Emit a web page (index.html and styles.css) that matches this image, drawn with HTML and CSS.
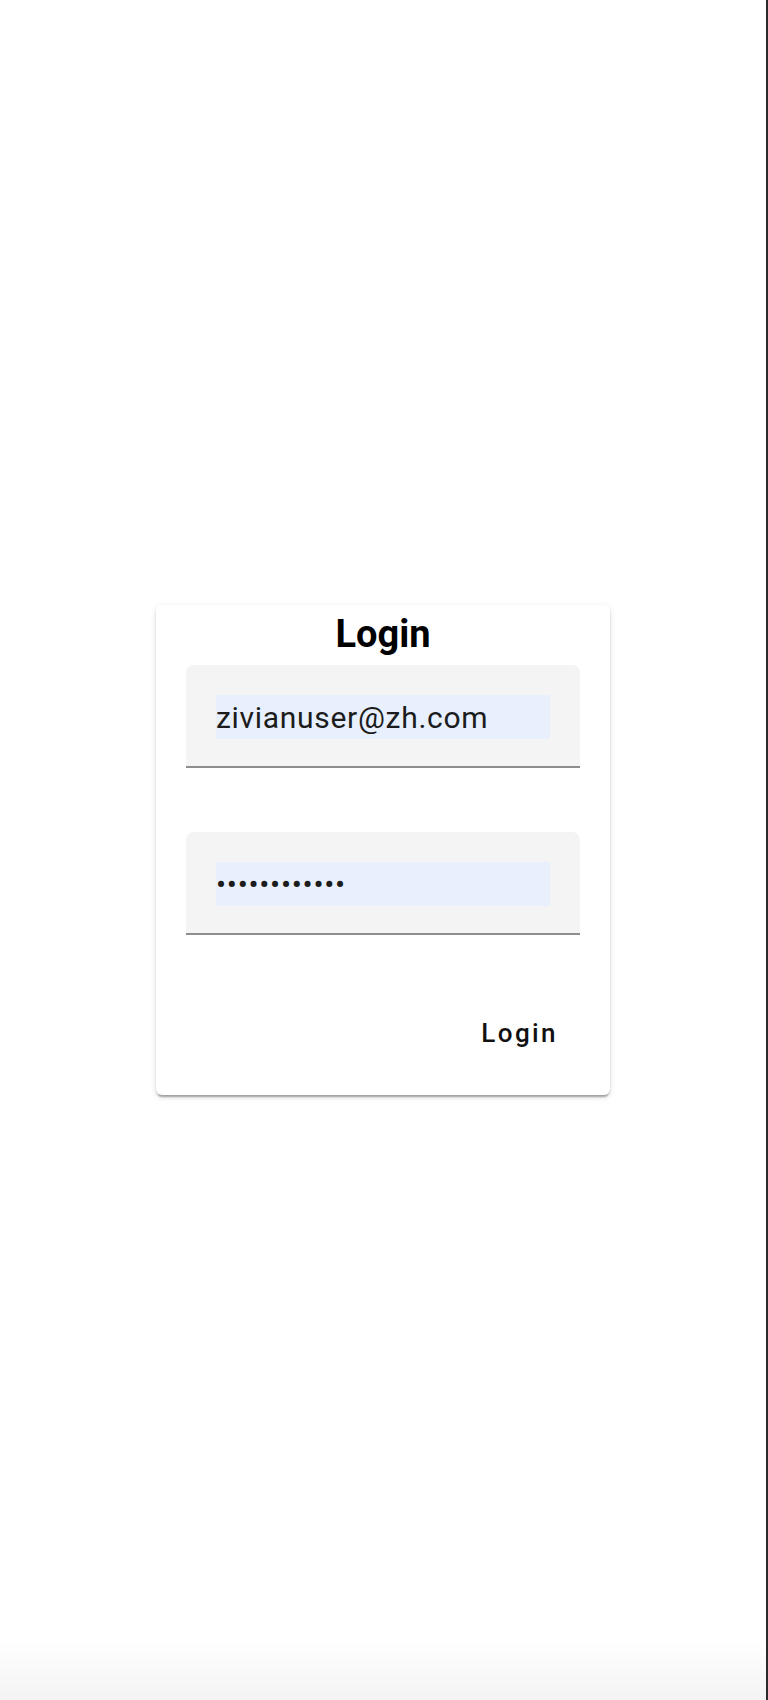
FILE: index.html
```html
<!DOCTYPE html>
<html lang="en">
<head>
<meta charset="utf-8">
<title>Login</title>
<link rel="stylesheet" href="styles.css">
</head>
<body>
  <div class="page">
    <form class="card">
      <h1 class="card-title">Login</h1>
      <div class="field">
        <input class="field-input" type="email" value="zivianuser@zh.com" aria-label="Email">
      </div>
      <div class="field field-gap">
        <input class="field-input" type="password" value="............" aria-label="Password">
      </div>
      <div class="card-actions">
        <button class="text-button" type="button">Login</button>
      </div>
    </form>
  </div>
  <div class="edge"></div>
</body>
</html>
```

FILE: styles.css
```css
html, body {
  margin: 0;
  padding: 0;
}

body {
  display: flex;
  min-height: 1700px;
  font-family: Roboto, "Liberation Sans", sans-serif;
  background: #ffffff;
}

.page {
  flex: 1;
  min-height: 1700px;
  display: flex;
  align-items: center;
  justify-content: center;
  background: linear-gradient(to bottom, #ffffff 0, #ffffff 1640px, #f4f4f4 1700px);
}

.edge {
  width: 2px;
  background: #2b2b2b;
}

.card {
  width: 454px;
  box-sizing: border-box;
  padding: 7px 30px 28px;
  background: #ffffff;
  border-radius: 6px;
  box-shadow: 0 4px 2px -2px rgba(0, 0, 0, 0.2),
              0 2px 2px 0 rgba(0, 0, 0, 0.14),
              0 2px 6px 0 rgba(0, 0, 0, 0.12);
  display: flex;
  flex-direction: column;
}

.card-title {
  margin: 0 0 9px;
  font-size: 38px;
  line-height: 44px;
  font-weight: 700;
  text-align: center;
  color: #000000;
}

.field {
  box-sizing: border-box;
  height: 103px;
  padding: 30px 30px 0 30px;
  background: #f4f4f4;
  border-radius: 8px 8px 0 0;
  border-bottom: 2px solid rgba(0, 0, 0, 0.42);
}

.field-gap {
  margin-top: 64px;
}

.field-input {
  display: block;
  width: 100%;
  height: 44px;
  box-sizing: border-box;
  margin: 0;
  padding: 0;
  border: none;
  outline: none;
  background: #e8f0fe;
  font-family: Roboto, "Liberation Sans", sans-serif;
  font-size: 30px;
  letter-spacing: 0.7px;
  color: #1c1c1c;
}

.card-actions {
  margin-top: 64px;
  display: flex;
  justify-content: flex-end;
}

.text-button {
  height: 68px;
  margin-right: 7px;
  padding: 0 15px;
  border: none;
  background: transparent;
  font-family: Roboto, "Liberation Sans", sans-serif;
  font-size: 26px;
  font-weight: 500;
  letter-spacing: 2.4px;
  line-height: 68px;
  color: #111111;
  cursor: pointer;
}
```
